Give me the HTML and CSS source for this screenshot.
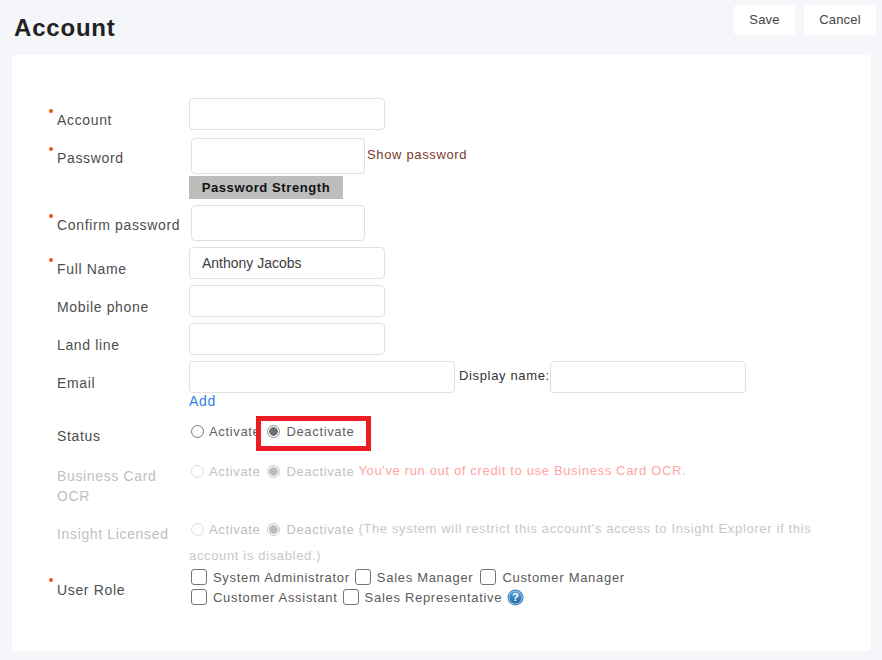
FILE: index.html
```html
<!DOCTYPE html>
<html lang="en">
<head>
<meta charset="utf-8">
<title>Account</title>
<link rel="stylesheet" href="styles.css">
</head>
<body>
<header class="topbar">
  <h1 class="title">Account</h1>
  <div class="actions">
    <button class="btn btn-save" type="button">Save</button>
    <button class="btn" type="button">Cancel</button>
  </div>
</header>
<main class="card">
  <form class="form">
    <div class="row row-account">
      <label class="label req">Account</label>
      <div class="field"><input class="input w196" type="text"></div>
    </div>
    <div class="row row-password">
      <label class="label req">Password</label>
      <div class="field">
        <div class="inline pw-line">
          <input class="input w174 h36" type="text">
          <a class="show-pw">Show password</a>
        </div>
        <div class="strength">Password Strength</div>
      </div>
    </div>
    <div class="row row-confirm">
      <label class="label req">Confirm password</label>
      <div class="field"><input class="input w174 h36 pw-input" type="text"></div>
    </div>
    <div class="row row-gap6">
      <label class="label req">Full Name</label>
      <div class="field"><input class="input w196 filled" type="text" value="Anthony Jacobs"></div>
    </div>
    <div class="row row-gap6">
      <label class="label">Mobile phone</label>
      <div class="field"><input class="input w196" type="text"></div>
    </div>
    <div class="row row-gap6">
      <label class="label">Land line</label>
      <div class="field"><input class="input w196" type="text"></div>
    </div>
    <div class="row row-gap6">
      <label class="label">Email</label>
      <div class="field">
        <div class="inline">
          <input class="input w266" type="text">
          <span class="display-name">Display name:</span>
          <input class="input w196" type="text">
        </div>
        <a class="add">Add</a>
      </div>
    </div>
    <div class="row row-status">
      <label class="label">Status</label>
      <div class="field radios">
        <label class="radio"><input type="radio" name="status"><span>Activate</span></label>
        <label class="radio"><input type="radio" name="status" checked><span>Deactivate</span></label>
        <div class="highlight"></div>
      </div>
    </div>
    <div class="row row-ocr disabled">
      <label class="label multi">Business Card OCR</label>
      <div class="field radios">
        <label class="radio"><input type="radio" name="ocr" disabled><span>Activate</span></label>
        <label class="radio"><input type="radio" name="ocr" checked disabled><span>Deactivate</span></label>
        <span class="warn">You've run out of credit to use Business Card OCR.</span>
      </div>
    </div>
    <div class="row row-insight disabled">
      <label class="label">Insight Licensed</label>
      <div class="field">
        <div class="radios">
          <label class="radio"><input type="radio" name="ins" disabled><span>Activate</span></label>
          <label class="radio"><input type="radio" name="ins" checked disabled><span>Deactivate</span></label>
          <span class="note">(The system will restrict this account's access to Insight Explorer if this</span>
        </div>
        <div class="note-cont">account is disabled.)</div>
      </div>
    </div>
    <div class="row row-role">
      <label class="label req">User Role</label>
      <div class="field roles">
        <div class="role-line">
          <label class="check"><input type="checkbox"><span>System Administrator</span></label>
          <label class="check"><input type="checkbox"><span>Sales Manager</span></label>
          <label class="check"><input type="checkbox"><span>Customer Manager</span></label>
        </div>
        <div class="role-line">
          <label class="check"><input type="checkbox"><span>Customer Assistant</span></label>
          <label class="check"><input type="checkbox"><span>Sales Representative</span></label>
          <svg class="help" viewBox="0 0 18 18" width="17" height="17" aria-hidden="true">
            <defs><linearGradient id="hg" x1="0" y1="0" x2="0" y2="1"><stop offset="0" stop-color="#5c9fd4"/><stop offset="1" stop-color="#1c68a8"/></linearGradient></defs>
            <circle cx="9" cy="9" r="8.4" fill="#2a78b8"/>
            <circle cx="9" cy="9" r="7" fill="url(#hg)" stroke="#bcdcf2" stroke-width="0.9"/>
            <text x="9" y="13" text-anchor="middle" class="help-q">?</text>
          </svg>
        </div>
      </div>
    </div>
  </form>
</main>
</body>
</html>
```

FILE: styles.css
```css
* { box-sizing: border-box; }
html, body { margin: 0; padding: 0; }
body {
  width: 882px;
  height: 660px;
  overflow: hidden;
  background: #f5f6fa;
  font-family: "Liberation Sans", Arial, sans-serif;
  font-size: 14px;
  color: #4f4f4f;
}
.topbar {
  height: 55px;
  display: flex;
  justify-content: space-between;
  padding: 5px 6px 0 14px;
}
.title {
  margin: 9px 0 0;
  font-size: 24px;
  line-height: 28px;
  font-weight: 700;
  letter-spacing: 0.8px;
  color: #222;
}
.actions { display: flex; gap: 9px; align-items: flex-start; }
.btn {
  height: 30px;
  padding: 0 0 2px;
  width: 61px;
  border: 0;
  border-radius: 3px;
  background: #fff;
  font: 13px "Liberation Sans", Arial, sans-serif;
  letter-spacing: 0.2px;
  color: #444;
}
.btn + .btn { width: 72px; }
.card {
  margin-left: 12px;
  width: 859px;
  height: 596px;
  background: #fff;
  border-radius: 4px;
  padding-top: 43px;
}
.row { display: flex; letter-spacing: 0.65px; }
.label {
  position: relative;
  width: 177px;
  flex: none;
  padding-left: 45px;
  line-height: 20px;
  padding-top: 12px;
  color: #4d4d4d;
}
.req::before {
  content: "";
  position: absolute;
  left: 37px;
  top: 11px;
  width: 4px;
  height: 4px;
  border-radius: 50%;
  background: #e8561a;
}
.field { flex: 1; min-width: 0; }
.inline { display: flex; align-items: flex-start; }
.input {
  display: block;
  height: 32px;
  border: 1px solid #e0e0e0;
  border-radius: 4px;
  background: #fff;
  padding: 0 12px;
  font: 14px "Liberation Sans", Arial, sans-serif;
  letter-spacing: 0;
  color: #3c3c3c;
  outline: none;
}
.w196 { width: 196px; }
.w174 { width: 174px; }
.w266 { width: 266px; }
.h36 { height: 36px; }
.row-password { margin-top: 8px; }
.row-password .label { padding-top: 10px; }
.row-password .label::before { top: 9px; }
.pw-line { margin-left: 2px; }
.pw-input { margin-left: 2px; }
.show-pw { margin: 7px 0 0 2px; line-height: 20px; font-size: 13px; color: #7a3b2e; }
.strength {
  width: 154px;
  height: 23px;
  margin-top: 2px;
  background: #bdbdbd;
  color: #111;
  font-size: 13px;
  font-weight: 700;
  line-height: 24px;
  letter-spacing: 0.6px;
  text-align: center;
}
.row-confirm { margin-top: 6px; }
.row-confirm .label { padding-top: 10px; }
.row-confirm .label::before { top: 9px; }
.row-gap6 { margin-top: 6px; }
.display-name { margin: 5px 0 0 4px; line-height: 20px; font-size: 13px; color: #333; white-space: nowrap; }
.add { display: block; margin-top: -1px; line-height: 18px; color: #2f7fe6; }
.radios { position: relative; display: flex; align-items: flex-start; padding-left: 2px; padding-top: 2px; }
.radio { display: inline-flex; align-items: center; height: 20px; white-space: nowrap; font-size: 13px; color: #5f5f5f; }
.radio input {
  appearance: none;
  width: 13px;
  height: 13px;
  margin: 0 5px 0 0;
  flex: none;
  border: 1px solid #767676;
  border-radius: 50%;
  background: #fff;
}
.radio input:checked {
  border-color: #949494;
  background: radial-gradient(circle, #6f6f6f 0 4px, #fff 4.6px);
}
.radio input:disabled { border-color: #dcdcdc; }
.radio input:disabled:checked {
  border-color: #c4c4c4;
  background: radial-gradient(circle, #bcbcbc 0 4px, #fff 4.6px);
}
.radio + .radio { margin-left: 7px; }
.radio + .radio input { margin-right: 6px; }
.row-status { margin-top: 9px; height: 40px; }
.row-status .label { padding-top: 7px; }
.highlight {
  position: absolute;
  left: 67px;
  top: -3px;
  width: 115px;
  height: 35px;
  border: 5px solid #ed1c24;
}
.disabled .label { color: #c0c0c0; }
.disabled .radio { color: #c0c0c0; }
.row-ocr { height: 58px; }
.row-ocr .label { padding-top: 7px; padding-right: 30px; }
.warn { font-size: 13px; color: #ffa3a6; line-height: 20px; margin-left: 4px; white-space: nowrap; }
.row-insight { height: 50px; }
.row-insight .label { padding-top: 7px; }
.note { font-size: 13px; color: #c8c8c8; line-height: 20px; margin-left: 4px; white-space: nowrap; }
.note-cont { margin-top: 7px; font-size: 13px; line-height: 20px; color: #c8c8c8; }
.row-role .label { padding-top: 13px; }
.row-role .label::before { top: 11px; }
.roles { padding-left: 2px; letter-spacing: 0.7px; }
.role-line { display: flex; align-items: center; height: 20px; }
.check { display: inline-flex; align-items: center; margin-right: 5px; font-size: 13px; white-space: nowrap; color: #5a5a5a; }
.role-line:first-child .check:nth-child(2) { margin-right: 7px; }
.check input {
  appearance: none;
  width: 16px;
  height: 16px;
  margin: 0 6px 0 0;
  border: 1px solid #757575;
  border-radius: 3px;
  background: #fff;
}
.help { margin-left: 0; }
.help-q { font: 700 12px "Liberation Sans", Arial, sans-serif; fill: #fff; letter-spacing: 0; }
```
